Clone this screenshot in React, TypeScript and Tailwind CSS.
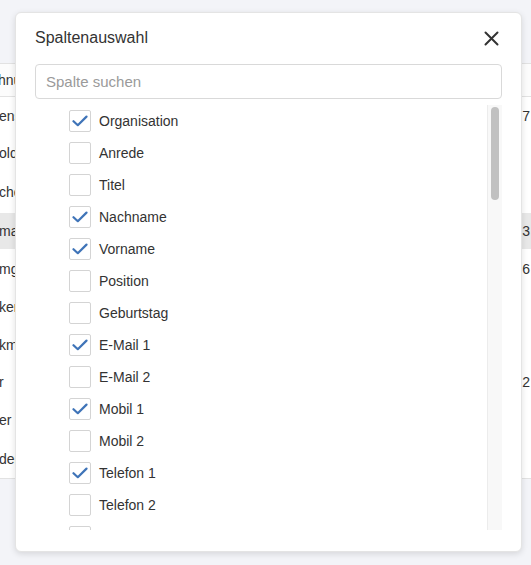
import React from "react";

const columns = [
  { label: "Organisation", checked: true },
  { label: "Anrede", checked: false },
  { label: "Titel", checked: false },
  { label: "Nachname", checked: true },
  { label: "Vorname", checked: true },
  { label: "Position", checked: false },
  { label: "Geburtstag", checked: false },
  { label: "E-Mail 1", checked: true },
  { label: "E-Mail 2", checked: false },
  { label: "Mobil 1", checked: true },
  { label: "Mobil 2", checked: false },
  { label: "Telefon 1", checked: true },
  { label: "Telefon 2", checked: false },
  { label: "Telefon 3", checked: false },
];

const rows = [
  { left: "ensen", right: "7", h: "h-[38px]", active: false },
  { left: "olding", right: "", h: "h-[36px]", active: false },
  { left: "chedel", right: "", h: "h-[42px]", active: false },
  { left: "mann", right: "3", h: "h-[36px]", active: true },
  { left: "mgart", right: "6", h: "h-[40px]", active: false },
  { left: "ker", right: "", h: "h-[37px]", active: false },
  { left: "kmann", right: "", h: "h-[38px]", active: false },
  { left: "r", right: "2", h: "h-[36px]", active: false },
  { left: "er", right: "", h: "h-[41px]", active: false },
  { left: "der", right: "", h: "h-[37px]", active: false },
];

const Checkbox = ({ checked }: { checked: boolean }) => (
  <div className="w-[22px] h-[22px] shrink-0 border border-[#d4d4d4] rounded-[2px] bg-white flex items-center justify-center">
    {checked && (
      <svg width="16" height="12" viewBox="0 0 16 12" fill="none">
        <path
          d="M1.5 6.2 L5.8 10.2 L14.5 1.6"
          stroke="#3f74b8"
          strokeWidth="2.2"
          strokeLinecap="round"
          strokeLinejoin="round"
        />
      </svg>
    )}
  </div>
);

export default function App() {
  return (
    <div
      className="relative w-[531px] h-[565px] overflow-hidden bg-[#f3f4f8] text-[#333]"
      style={{ fontFamily: '"Liberation Sans", Arial, sans-serif' }}
    >
      {/* table behind the dialog */}
      <div className="pt-[63px]">
        <div className="bg-white border-b border-[#e2e2e2]">
          <div className="h-[34px] flex items-center justify-between border-y border-[#e2e2e2] bg-[#fcfcfc] text-[14px]">
            <span className="ml-[-2px] whitespace-nowrap">hnung</span>
          </div>
          {rows.map((r, i) => (
            <div
              key={i}
              className={`${r.h} flex items-center justify-between text-[14px] ${r.active ? "bg-[#e8e8e8]" : ""}`}
            >
              <span className="ml-[-1px] whitespace-nowrap">{r.left}</span>
              <span className="mr-[1px]">{r.right}</span>
            </div>
          ))}
        </div>
      </div>

      {/* dialog */}
      <div className="absolute left-[15px] top-[12px] w-[507px] h-[540px] bg-white rounded-[6px] border border-[#e4e4e4] shadow-[0_2px_6px_rgba(0,0,0,0.12)] px-[19px] pt-[13px] flex flex-col">
        <div className="flex items-center justify-between h-[24px]">
          <h2 className="text-[16px] text-[#333]">Spaltenauswahl</h2>
          <button className="w-[20px] h-[20px] flex items-center justify-center mr-[1px]">
            <svg width="15" height="15" viewBox="0 0 15 15" fill="none">
              <path d="M1.5 1.5 L13.5 13.5 M13.5 1.5 L1.5 13.5" stroke="#333" strokeWidth="2" strokeLinecap="round" />
            </svg>
          </button>
        </div>
        <input
          placeholder="Spalte suchen"
          className="mt-[14px] h-[35px] w-full border border-[#d9d9d9] rounded-[4px] px-[10px] text-[15px] placeholder:text-[#9a9a9a] outline-none"
        />
        <div className="mt-[6px] h-[425px] flex overflow-hidden">
          <div className="flex-1 overflow-hidden pl-[34px]">
            {columns.map((c) => (
              <div key={c.label} className="h-[32px] flex items-center gap-[8px]">
                <Checkbox checked={c.checked} />
                <span className="text-[14px] text-[#333]">{c.label}</span>
              </div>
            ))}
          </div>
          <div className="w-[15px] bg-[#f8f8f8] border-l border-[#ececec] pt-[2px] flex justify-center">
            <div className="w-[8px] h-[93px] rounded-full bg-[#c1c1c1]" />
          </div>
        </div>
      </div>
    </div>
  );
}
